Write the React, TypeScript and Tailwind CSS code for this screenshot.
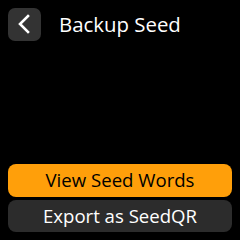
import React from 'react';

export default function App() {
  return (
    <div
      className="w-[240px] h-[240px] bg-black flex flex-col overflow-hidden"
      style={{ fontFamily: '"Open Sans", "Noto Sans", sans-serif' }}
    >
      <div className="flex items-center h-[48px] pl-[8px]">
        <button className="w-[33px] h-[33px] rounded-[7px] bg-[#333333] flex items-center justify-center">
          <svg width="16" height="22" viewBox="0 0 16 22" fill="none" className="mr-[2px]">
            <path d="M12 3 L4 11 L12 19" stroke="white" strokeWidth="2.6" strokeLinecap="square" strokeLinejoin="miter" />
          </svg>
        </button>
        <div className="ml-[18px] text-white text-[20.4px] font-medium leading-none">Backup Seed</div>
      </div>
      <div className="flex-1" />
      <div className="flex flex-col gap-[3px] px-[8px] pb-[8px]">
        <button className="h-[33px] rounded-[8px] bg-[#FF9F0A] text-black text-[18.6px] font-medium leading-none flex items-center justify-center">
          View Seed Words
        </button>
        <button className="h-[32px] rounded-[8px] bg-[#2C2C2C] text-white text-[18.6px] font-medium leading-none flex items-center justify-center">
          Export as SeedQR
        </button>
      </div>
    </div>
  );
}
